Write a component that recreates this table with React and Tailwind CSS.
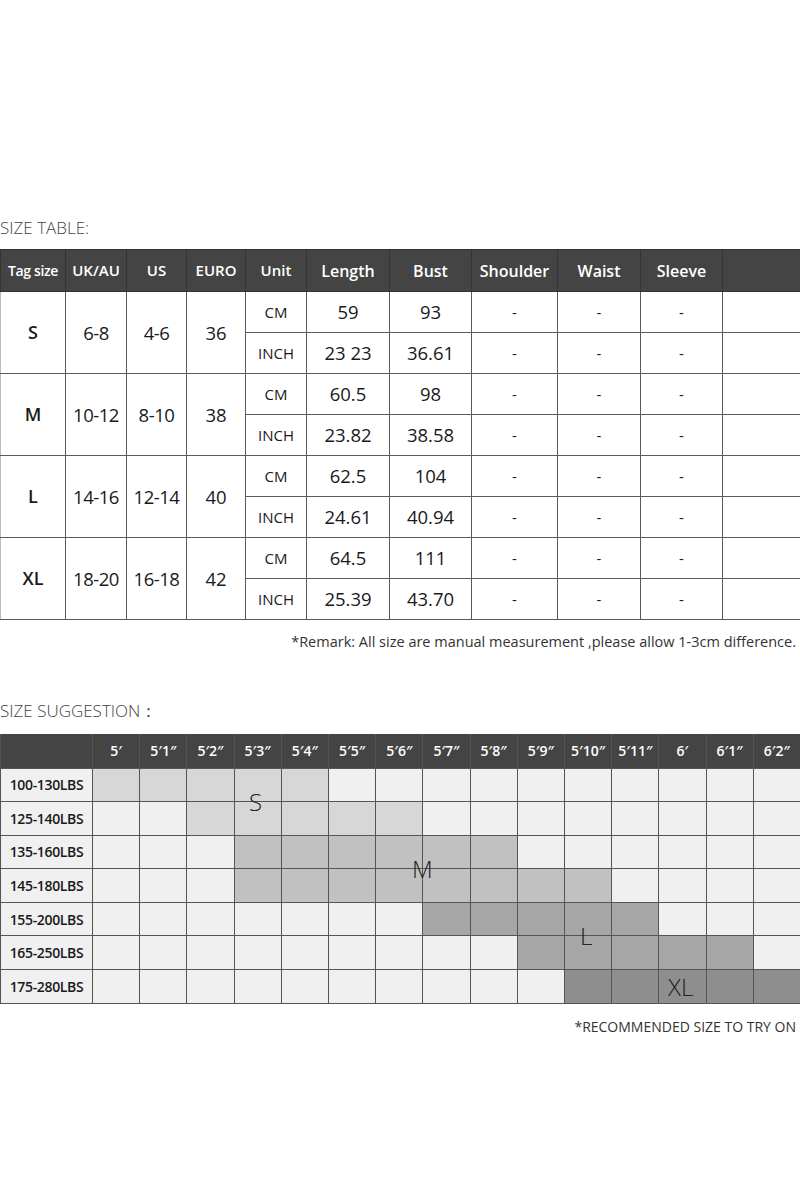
const HEADERS = ["Tag size", "UK/AU", "US", "EURO", "Unit", "Length", "Bust", "Shoulder", "Waist", "Sleeve", ""];
const WIDTHS = [65, 61, 60, 59, 61, 83, 82, 86, 83, 82, 78];

const SIZES = [
  { tag: "S", uk: "6-8", us: "4-6", euro: "36", cm: ["59", "93"], inch: ["23 23", "36.61"] },
  { tag: "M", uk: "10-12", us: "8-10", euro: "38", cm: ["60.5", "98"], inch: ["23.82", "38.58"] },
  { tag: "L", uk: "14-16", us: "12-14", euro: "40", cm: ["62.5", "104"], inch: ["24.61", "40.94"] },
  { tag: "XL", uk: "18-20", us: "16-18", euro: "42", cm: ["64.5", "111"], inch: ["25.39", "43.70"] },
];

const HEIGHTS = ["5′", "5′1″", "5′2″", "5′3″", "5′4″", "5′5″", "5′6″", "5′7″", "5′8″", "5′9″", "5′10″", "5′11″", "6′", "6′1″", "6′2″"];

// [label, first shaded col, last shaded col, shade class]
const WEIGHTS = [
  ["100-130LBS", 0, 4, "bg-[#d7d7d7]"],
  ["125-140LBS", 2, 6, "bg-[#d7d7d7]"],
  ["135-160LBS", 3, 8, "bg-[#c1c1c1]"],
  ["145-180LBS", 3, 10, "bg-[#c1c1c1]"],
  ["155-200LBS", 7, 11, "bg-[#a7a7a7]"],
  ["165-250LBS", 9, 13, "bg-[#a7a7a7]"],
  ["175-280LBS", 10, 14, "bg-[#8e8e8e]"],
];

function Cell({ children, className = "", rowSpan }) {
  return (
    <td rowSpan={rowSpan} className={`border border-[#5a5a5a] text-center align-middle p-0 ${className}`}>
      {children}
    </td>
  );
}

function SizeTable() {
  return (
    <table className="w-[800px] table-fixed border-collapse text-[#1a1a1a]">
      <colgroup>
        {WIDTHS.map((w, i) => (
          <col key={i} style={{ width: w }} />
        ))}
      </colgroup>
      <thead>
        <tr className="h-[42px] bg-[#444]">
          {HEADERS.map((h, i) => (
            <th
              key={i}
              className={`border border-[#333] p-0 font-semibold text-white whitespace-nowrap ${
                i === 0 ? "text-[14px] tracking-tight" : i < 5 ? "text-[15px]" : "text-[16px]"
              }`}
            >
              {h}
            </th>
          ))}
        </tr>
      </thead>
      <tbody>
        {SIZES.map((s) => [
          <tr key={s.tag + "cm"} className="h-[41px]">
            <Cell rowSpan={2} className="border-l-[#bbb] text-[18px] font-semibold">{s.tag}</Cell>
            <Cell rowSpan={2} className="text-[18.5px] font-medium tracking-tight">{s.uk}</Cell>
            <Cell rowSpan={2} className="text-[18.5px] font-medium tracking-tight">{s.us}</Cell>
            <Cell rowSpan={2} className="text-[18.5px] font-medium">{s.euro}</Cell>
            <Cell className="text-[15px] font-medium">CM</Cell>
            <Cell className="text-[18.5px]">{s.cm[0]}</Cell>
            <Cell className="text-[18.5px]">{s.cm[1]}</Cell>
            <Cell className="text-[15px]">-</Cell>
            <Cell className="text-[15px]">-</Cell>
            <Cell className="text-[15px]">-</Cell>
            <Cell className="border-r-0" />
          </tr>,
          <tr key={s.tag + "in"} className="h-[41px]">
            <Cell className="text-[15px] font-medium">INCH</Cell>
            <Cell className="text-[18.5px]">{s.inch[0]}</Cell>
            <Cell className="text-[18.5px]">{s.inch[1]}</Cell>
            <Cell className="text-[15px]">-</Cell>
            <Cell className="text-[15px]">-</Cell>
            <Cell className="text-[15px]">-</Cell>
            <Cell className="border-r-0" />
          </tr>,
        ])}
      </tbody>
    </table>
  );
}

function SuggestionGrid() {
  return (
    <div className="relative">
      <div className="grid grid-cols-[91px_repeat(15,minmax(0,1fr))] gap-px bg-[#555] border-l border-b border-[#555]">
        <div className="h-[34px] bg-[#444]" />
        {HEIGHTS.map((h) => (
          <div key={h} className="h-[34px] bg-[#444] flex items-center justify-center text-white text-[14px] font-semibold">
            {h}
          </div>
        ))}
        {WEIGHTS.map(([label, from, to, shade]) => [
          <div key={label} className="h-[32.6px] bg-[#f0f0f0] flex items-center justify-center text-[14px] font-semibold text-[#1a1a1a] tracking-tight">
            {label}
          </div>,
          ...HEIGHTS.map((h, i) => (
            <div key={label + h} className={i >= from && i <= to ? shade : "bg-[#f0f0f0]"} />
          )),
        ])}
      </div>
      <span className="absolute left-[249px] top-[56px] text-[24px] leading-none font-light text-[#222]">S</span>
      <span className="absolute left-[412px] top-[123px] text-[24px] leading-none font-light text-[#222]">M</span>
      <span className="absolute left-[580px] top-[190px] text-[24px] leading-none font-light text-[#222]">L</span>
      <span className="absolute left-[668px] top-[241px] text-[24px] leading-none font-light text-[#222]">XL</span>
    </div>
  );
}

export default function App() {
  return (
    <div className="w-[800px] h-[1200px] bg-white font-['Open_Sans','Noto_Sans',sans-serif] overflow-hidden">
      <div className="h-[219px]" />
      <p className="text-[17px] font-light text-[#444] leading-none">SIZE TABLE:</p>
      <div className="h-[13px]" />
      <SizeTable />
      <p className="mt-[15px] pr-1 text-right text-[14.5px] text-[#333] leading-none">
        *Remark: All size are manual measurement ,please allow 1-3cm difference.
      </p>
      <div className="h-[52px]" />
      <p className="text-[17px] font-light text-[#444] leading-none">SIZE SUGGESTION：</p>
      <div className="h-[15px]" />
      <SuggestionGrid />
      <p className="mt-[16px] pr-1 text-right text-[14px] text-[#333] leading-none">
        *RECOMMENDED SIZE TO TRY ON
      </p>
    </div>
  );
}
